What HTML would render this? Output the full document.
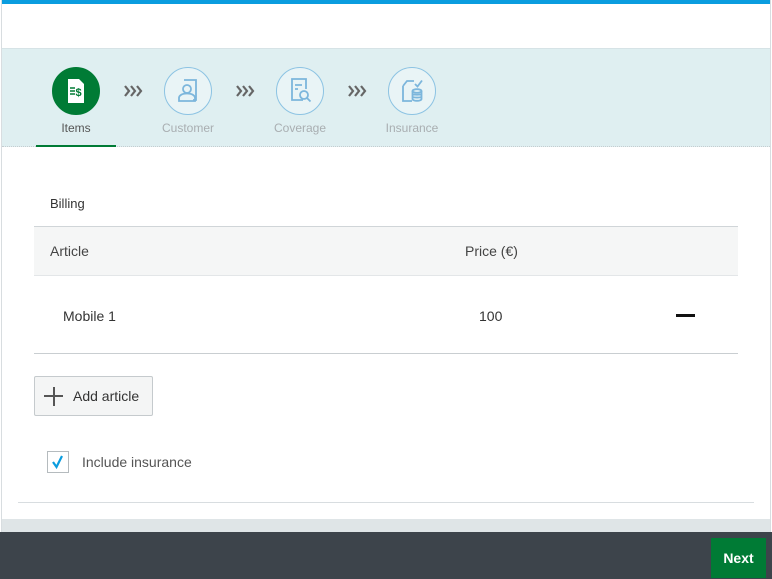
<!DOCTYPE html>
<html><head><style>
*{margin:0;padding:0;box-sizing:border-box}
body{width:772px;height:579px;overflow:hidden;background:#fff;font-family:"Liberation Sans",Arial,sans-serif;position:relative}
.frame{position:absolute;left:1px;top:0;width:770px;height:532px;border-left:1px solid #d8dde0;border-right:1px solid #d8dde0;background:#fff}
.top{position:absolute;left:2px;top:0;width:768px;height:4px;background:#0a9ddf}
.wiz{position:absolute;left:2px;top:48px;width:768px;height:99px;background:#dfeff1;border-top:1px solid #d6e3e6;border-bottom:1px dotted #c5cdd0}
.step{position:absolute;top:18px;width:48px;height:48px;border-radius:50%;border:1px solid #8cc3e3;background:#e9f4f6}
.lbl{position:absolute;top:72px;font-size:12px;color:#a9aeb1;width:80px;text-align:center}
.arr{position:absolute;top:36px}
.t{position:absolute;font-size:14px;color:#333}
.strip{position:absolute;left:2px;top:519px;width:768px;height:13px;background:#dfe5e7}
.foot{position:absolute;left:0;top:532px;width:772px;height:47px;background:#3d444b}
.next{position:absolute;left:711px;top:538px;width:55px;height:40px;background:#007b35;color:#fff;font-size:14px;font-weight:bold;text-align:center;line-height:40px}
</style></head><body>
<div class="frame"></div>
<div class="top"></div>
<div class="wiz">
 <div class="step" style="left:50px;background:#007b35;border-color:#007b35">
  <svg width="46" height="46" viewBox="0 0 46 46"><path d="M15 11h11l5 5v19H15z" fill="#fff"/><path d="M17 20h5M17 23h5M17 26h5" stroke="#007b35" stroke-width="1.6"/><text x="22.5" y="28" font-size="11" font-weight="bold" fill="#007b35" font-family="Liberation Sans">$</text></svg>
 </div>
 <div class="lbl" style="left:34px;color:#555">Items</div>
 <div style="position:absolute;left:34px;top:96px;width:80px;height:2px;background:#007b35"></div>
 <svg class="arr" style="left:121px" width="20" height="12" viewBox="0 0 20 12" fill="none" stroke="#666" stroke-width="2.2"><path d="M2 1l4 5-4 5M8 1l4 5-4 5M14 1l4 5-4 5"/></svg>
 <div class="step" style="left:162px"><svg width="46" height="46" viewBox="0 0 46 46" fill="none" stroke="#7cb6dc" stroke-width="1.8"><path d="M19 12h12v20h-3"/><circle cx="22" cy="21" r="4"/><path d="M14 33v-3c0-2.5 3-4.5 8-4.5s8 2 8 4.5v3z"/></svg></div>
 <div class="lbl" style="left:146px">Customer</div>
 <svg class="arr" style="left:233px" width="20" height="12" viewBox="0 0 20 12" fill="none" stroke="#666" stroke-width="2.2"><path d="M2 1l4 5-4 5M8 1l4 5-4 5M14 1l4 5-4 5"/></svg>
 <div class="step" style="left:274px"><svg width="46" height="46" viewBox="0 0 46 46" fill="none" stroke="#7cb6dc" stroke-width="1.8"><path d="M26 32H15V11h14v10"/><path d="M18 17h7M18 21h3"/><circle cx="27" cy="27" r="4"/><path d="M30 30l3.5 3.5"/></svg></div>
 <div class="lbl" style="left:258px">Coverage</div>
 <svg class="arr" style="left:345px" width="20" height="12" viewBox="0 0 20 12" fill="none" stroke="#666" stroke-width="2.2"><path d="M2 1l4 5-4 5M8 1l4 5-4 5M14 1l4 5-4 5"/></svg>
 <div class="step" style="left:386px"><svg width="46" height="46" viewBox="0 0 46 46" fill="none" stroke="#7cb6dc" stroke-width="1.8"><path d="M14 18v15h9M14 18l4-5h7"/><path d="M26 16l2.5 2.5 4.5-6"/><ellipse cx="28" cy="23" rx="4.5" ry="1.8"/><path d="M23.5 23v8c0 1 2 1.8 4.5 1.8s4.5-.8 4.5-1.8v-8M23.5 26c0 1 9 1 9 0M23.5 28.8c0 1 9 1 9 0"/></svg></div>
 <div class="lbl" style="left:370px">Insurance</div>
</div>
<div class="t" style="left:50px;top:196px;font-size:13px">Billing</div>
<div style="position:absolute;left:34px;top:226px;width:704px;height:50px;background:#f5f6f6;border-top:1px solid #d0d5d8;border-bottom:1px solid #e3e6e8"></div>
<div class="t" style="left:50px;top:243px;color:#444">Article</div>
<div class="t" style="left:465px;top:243px;color:#444">Price (€)</div>
<div class="t" style="left:63px;top:308px">Mobile 1</div>
<div class="t" style="left:479px;top:308px">100</div>
<div style="position:absolute;left:676px;top:314px;width:19px;height:3px;background:#111"></div>
<div style="position:absolute;left:34px;top:353px;width:704px;height:1px;background:#c9ced1"></div>
<div style="position:absolute;left:34px;top:376px;width:119px;height:40px;border:1px solid #c5cacd;background:#f4f5f5;border-radius:2px"></div>
<div style="position:absolute;left:44px;top:395px;width:19px;height:2px;background:#555"></div>
<div style="position:absolute;left:53px;top:387px;width:2px;height:19px;background:#555"></div>
<div class="t" style="left:73px;top:388px;color:#333">Add article</div>
<div style="position:absolute;left:47px;top:451px;width:22px;height:22px;border:1px solid #b5bbbe;background:#fff"><svg width="20" height="20" viewBox="0 0 20 20"><path d="M5 10l3.5 5 5.5-11" stroke="#0a9ddf" stroke-width="2.2" fill="none"/></svg></div>
<div class="t" style="left:82px;top:454px;color:#555">Include insurance</div>
<div style="position:absolute;left:18px;top:502px;width:736px;height:1px;background:#d8dde0"></div>
<div class="strip"></div>
<div class="foot"></div>
<div class="next">Next</div>
</body></html>
